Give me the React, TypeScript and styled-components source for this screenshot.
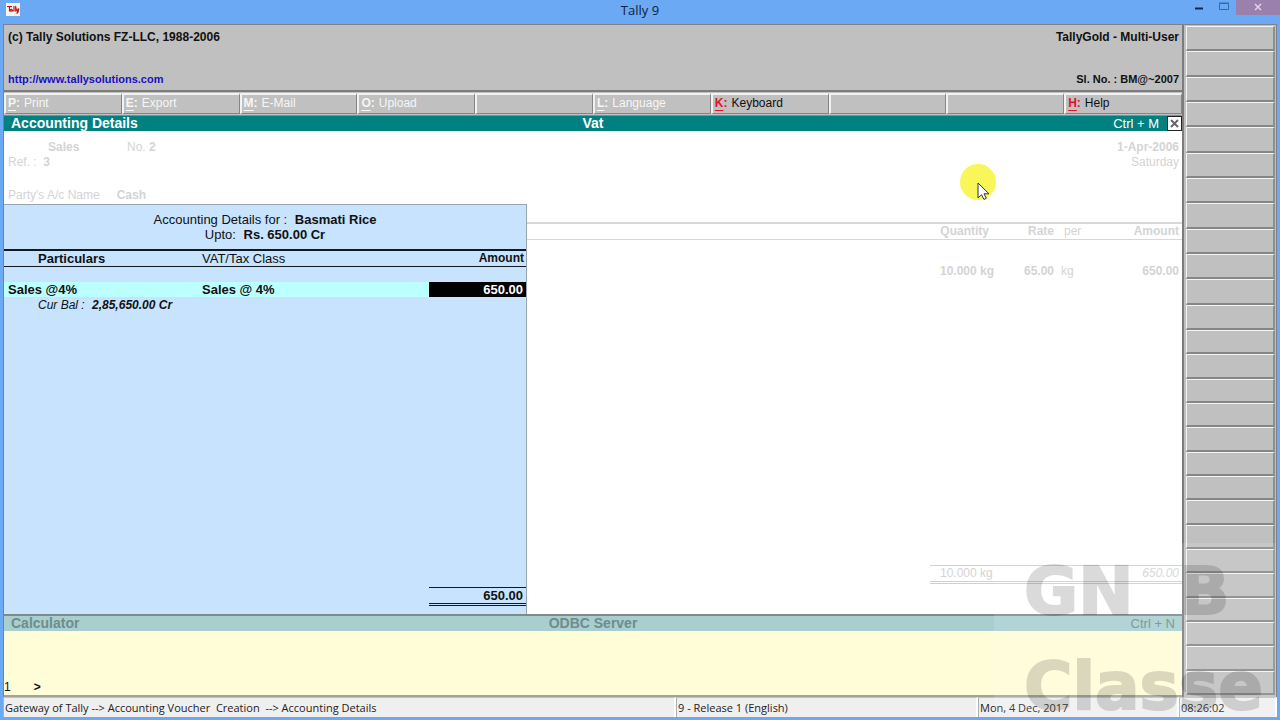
import React from "react";
import styled, { createGlobalStyle } from "styled-components";

const GlobalStyle = createGlobalStyle`
  * { box-sizing: border-box; }
  body { margin: 0; font: 13px/15px "Liberation Sans", Arial, sans-serif; color: #111; }
  button, input { font: inherit; color: inherit; margin: 0; }
`;

const Window = styled.div`
  position: relative;
  display: flex;
  flex-direction: column;
  min-height: 100vh;
  padding: 0 3px 3px;
  background: #6ba9f5;
  overflow: hidden;
`;

const TitleBar = styled.header`
  position: relative;
  display: flex;
  align-items: flex-start;
  justify-content: space-between;
  height: 24px;
  margin-right: -3px;
`;

const AppIcon = styled.svg`
  margin: 3px 0 0 3px;
`;

const Title = styled.h1`
  position: absolute;
  left: 0;
  right: 3px;
  top: 0;
  margin: 0;
  text-align: center;
  font: 13px/20px "Open Sans", "Noto Sans", sans-serif;
  color: #10203c;
`;

const Controls = styled.div`
  position: relative;
  display: flex;
`;

const ControlButton = styled.button<{ $close?: boolean }>`
  display: flex;
  align-items: center;
  justify-content: center;
  width: ${(p) => (p.$close ? 44 : 25)}px;
  height: 15px;
  padding: 0 0 ${(p) => (p.$close ? 2 : 0)}px;
  border: 0;
  background: ${(p) => (p.$close ? "#9a80ad" : "transparent")};
`;

const Frame = styled.div`
  flex: 1;
  display: flex;
  border: solid #7d828c;
  border-width: 1px 1px 0;
  background: #c0c0c0;
`;

const Main = styled.div`
  flex: 1;
  min-width: 0;
  display: flex;
  flex-direction: column;
  border-right: 2px solid #7c7c7c;
`;

const Banner = styled.div`
  display: flex;
  justify-content: space-between;
  height: 67px;
  padding: 5px 3px 3px 4px;
  border-bottom: 2px solid #7c7c7c;
  font-weight: bold;
  font-size: 12px;
`;

const BannerSide = styled.div<{ $end?: boolean }>`
  display: flex;
  flex-direction: column;
  justify-content: space-between;
  align-items: ${(p) => (p.$end ? "flex-end" : "flex-start")};
`;

const SiteLink = styled.a`
  color: #1a10c4;
  font-size: 11px;
  text-decoration: none;
`;

const Serial = styled.span`
  font-size: 11px;
`;

const Toolbar = styled.nav`
  display: grid;
  grid-template-columns: repeat(10, 1fr);
  height: 24px;
  padding: 1px 0;
  border-bottom: 1px solid #8a8a8a;
`;

const ToolButton = styled.button<{ $on?: boolean }>`
  display: flex;
  gap: 4px;
  align-items: center;
  padding: 0 2px 1px;
  border: solid;
  border-width: 2px 1px 1px 2px;
  border-color: #f2f2f2 #858585 #858585 #f2f2f2;
  background: #c0c0c0;
  color: ${(p) => (p.$on ? "#111" : "#f6f6f6")};
  font-size: 12px;
  line-height: 15px;
`;

const HotKey = styled.b<{ $on?: boolean }>`
  color: ${(p) => (p.$on ? "#e0142c" : "#f6f6f6")};
  u { text-underline-offset: 3px; }
`;

const Strip = styled.div<{ $dim?: boolean }>`
  display: grid;
  grid-template-columns: 1fr auto 1fr;
  align-items: center;
  height: 15px;
  background: ${(p) => (p.$dim ? "#a8cece" : "#008080")};
  color: ${(p) => (p.$dim ? "#6f8c8e" : "#fff")};
  font-size: 14px;
  font-weight: bold;
`;

const StripStart = styled.span`
  padding-left: 7px;
`;

const StripEnd = styled.div<{ $dim?: boolean }>`
  display: flex;
  align-items: center;
  justify-content: flex-end;
  gap: 8px;
  padding-right: ${(p) => (p.$dim ? 7 : 0)}px;
  font-weight: normal;
  font-size: 13px;
`;

const CloseBox = styled.button`
  display: flex;
  align-items: center;
  justify-content: center;
  width: 15px;
  height: 15px;
  padding: 0;
  border: 1px solid #222;
  background: #fff;
`;

const Workspace = styled.div`
  position: relative;
  flex: 1;
  display: flex;
  flex-direction: column;
  min-height: 480px;
  background: #fff;
  border-bottom: 2px solid #7f8a8c;
`;

const Voucher = styled.section`
  flex: 1;
  display: flex;
  flex-direction: column;
  padding-top: 9px;
  color: #d4d4d4;
  font-size: 12px;
`;

const VoucherHead = styled.div`
  display: flex;
  justify-content: space-between;
  height: 48px;
  padding: 0 3px 0 4px;
`;

const VoucherNumbers = styled.div`
  display: grid;
  grid-template-columns: 40px 79px auto;
  grid-template-rows: 15px 15px;
`;

const Wide = styled.span`
  grid-column: 1 / 4;
`;

const VoucherDate = styled.div`
  display: flex;
  flex-direction: column;
  text-align: right;
`;

const Party = styled.div`
  display: flex;
  gap: 17px;
  height: 34px;
  padding-left: 4px;
`;

const Items = styled.table`
  width: 100%;
  table-layout: fixed;
  border-collapse: collapse;
  text-align: right;
  font-weight: bold;
  th { height: 16px; padding: 0; border: solid #d8d8d8; border-width: 2px 0 1px; }
  td { height: 47px; padding: 16px 0 0; vertical-align: middle; }
  th:nth-child(2) { padding-right: 5px; }
  th:nth-child(4) { font-weight: normal; text-align: left; padding-left: 10px; }
  td:nth-child(4) { text-align: left; padding-left: 7px; font-weight: normal; }
  th:last-child, td:last-child { padding-right: 3px; }
`;

const Col = styled.col<{ $w?: number }>`
  width: ${(p) => (p.$w ? `${p.$w}px` : "auto")};
`;

const VoucherTotal = styled.div`
  display: flex;
  justify-content: space-between;
  width: 252px;
  margin: auto 0 30px auto;
  padding: 0 3px 0 10px;
  border-top: 1px solid #d0d0d0;
  border-bottom: 3px double #d0d0d0;
`;

const Panel = styled.section`
  position: absolute;
  left: 0;
  top: 73px;
  bottom: 0;
  width: 44.4%;
  display: flex;
  flex-direction: column;
  border: solid #98a6b4;
  border-width: 1px 1px 0 0;
  background: #c7e3fd;
`;

const PanelTitle = styled.div`
  height: 44px;
  padding-top: 7px;
  text-align: center;
  b { margin-left: 4px; }
`;

const Ledger = styled.table`
  width: 100%;
  table-layout: fixed;
  border-collapse: collapse;
  text-align: left;
  th { height: 16px; padding: 0; border: solid #101820; border-width: 2px 0 1px; }
  td { height: 15px; padding: 0; }
  tbody::before { content: ""; display: block; height: 15px; }
  th:first-child { padding-left: 34px; }
  th:nth-child(2) { font-weight: normal; }
  th:last-child { text-align: right; padding-right: 2px; font-size: 12px; }
`;

const Selected = styled.tr`
  background: #bcffff;
  font-weight: bold;
  td:first-child { padding-left: 4px; }
`;

const AmountInput = styled.input`
  display: block;
  width: 100%;
  height: 15px;
  padding: 0 3px;
  border: 0;
  outline: 0;
  background: #000;
  color: #fff;
  font-weight: bold;
  text-align: right;
`;

const Balance = styled.td`
  font-style: italic;
  font-size: 12px;
  && { padding: 1px 0 0 34px; }
  b { margin-left: 4px; }
`;

const PanelTotal = styled.div`
  width: 97px;
  margin: auto 0 8px auto;
  padding: 0 3px;
  border-top: 1px solid #101820;
  border-bottom: 3px double #101820;
  text-align: right;
  font-weight: bold;
`;

const Calculator = styled.label`
  display: flex;
  align-items: flex-end;
  height: 66px;
  border-bottom: 2px solid #a3a39b;
  background: #fffcd8;
  font-size: 12px;
  b { margin: 0 8px 0 23px; }
`;

const CalcInput = styled.input`
  flex: 1;
  height: 15px;
  padding: 0;
  border: 0;
  outline: 0;
  background: transparent;
`;

const SideBar = styled.aside`
  display: flex;
  flex-direction: column;
  width: 92px;
  padding: 1px 1px 2px 2px;
`;

const SideGroup = styled.div<{ $grow: number }>`
  flex: ${(p) => p.$grow} 1 0;
  display: flex;
  flex-direction: column;
`;

const SideButton = styled.button`
  flex: 1;
  min-height: 0;
  padding: 0;
  border: solid;
  border-width: 1px 2px 2px 1px;
  border-color: #f4f4f4 #8e8e8e #868686 #f4f4f4;
  background: #c0c0c0;
`;

const StatusBar = styled.footer`
  display: grid;
  grid-template-columns: 673fr 302fr 201fr 98fr;
  height: 20px;
  background: #f0eff0;
  font: 11px/19px "Open Sans", "Noto Sans", sans-serif;
  color: #222;
`;

const StatusCell = styled.span`
  padding-left: 1px;
  border-left: 1px solid #b0b0b0;
  border-top: 1px solid #c4c0c0;
  border-right: 2px solid #fff;
  white-space: pre;
`;

const Pointer = styled.svg`
  position: absolute;
  left: 958px;
  top: 163px;
`;

const Watermark = styled.div`
  position: absolute;
  right: 4px;
  bottom: 3px;
  width: 282px;
  height: 174px;
  padding: 1px 0 0 30px;
  background: rgba(255, 255, 255, 0.12);
  font: bold 66px/95px "DejaVu Sans", sans-serif;
  white-space: pre;
  pointer-events: none;
`;

const WatermarkText = styled.span`
  opacity: 0.14;
  color: #000;
  -webkit-text-stroke: 2px #000;
`;

const tools = [
  { key: "P", label: "Print" },
  { key: "E", label: "Export" },
  { key: "M", label: "E-Mail" },
  { key: "O", label: "Upload" },
  {},
  { key: "L", label: "Language" },
  { key: "K", label: "Keyboard", on: true },
  {},
  {},
  { key: "H", label: "Help", on: true },
] as { key?: string; label?: string; on?: boolean }[];

const sideGroups = [
  { count: 12, grow: 304 },
  { count: 15, grow: 365 },
];

export default function App() {
  return (
    <>
      <GlobalStyle />
      <Window>
        <TitleBar>
          <AppIcon width="14" height="13" viewBox="0 0 14 13">
            <rect width="14" height="13" fill="#fbf3ee" />
            <path d="M1 3.5h5M3.5 3.5v5M6 6.5q-2-.5-1.500 1.500q1.500.5 2-1.500v2M8 3v5.500M9.700 3v5.500M11 5.500v2.500q1 .5 1.700-2.500q0 4-2.200 5" fill="none" stroke="#c01818" strokeWidth="1.200" />
          </AppIcon>
          <Title>Tally 9</Title>
          <Controls>
            <ControlButton aria-label="Minimize">
              <svg width="8" height="15"><path d="M0 8.500h8" stroke="#14264a" strokeWidth="2" /></svg>
            </ControlButton>
            <ControlButton aria-label="Maximize">
              <svg width="10" height="15"><path d="M.5 3.500h9v6h-9zM0 3h10" fill="none" stroke="#2f6fa8" /></svg>
            </ControlButton>
            <ControlButton $close aria-label="Close window">
              <svg width="8" height="8"><path d="M1 1l6 6M7 1l-6 6" stroke="#e0d4ea" strokeWidth="1.500" /></svg>
            </ControlButton>
          </Controls>
        </TitleBar>
        <Frame>
          <Main>
            <Banner>
              <BannerSide>
                <span>(c) Tally Solutions FZ-LLC, 1988-2006</span>
                <SiteLink href="http://www.tallysolutions.com">http://www.tallysolutions.com</SiteLink>
              </BannerSide>
              <BannerSide $end>
                <span>TallyGold - Multi-User</span>
                <Serial>Sl. No. : BM@~2007</Serial>
              </BannerSide>
            </Banner>
            <Toolbar>
              {tools.map((t, i) => (
                <ToolButton key={i} $on={t.on}>
                  {t.key && <HotKey $on={t.on}><u>{t.key}</u>:</HotKey>}
                  {t.label}
                </ToolButton>
              ))}
            </Toolbar>
            <Strip>
              <StripStart>Accounting Details</StripStart>
              <span>Vat</span>
              <StripEnd>
                Ctrl + M
                <CloseBox aria-label="Close">
                  <svg width="9" height="9"><path d="M1 1l7 7M8 1l-7 7" stroke="#666" strokeWidth="2" /></svg>
                </CloseBox>
              </StripEnd>
            </Strip>
            <Workspace>
              <Voucher>
                <VoucherHead>
                  <VoucherNumbers>
                    <span />
                    <b>Sales</b>
                    <span>No. <b>2</b></span>
                    <Wide>Ref. :&nbsp; <b>3</b></Wide>
                  </VoucherNumbers>
                  <VoucherDate>
                    <b>1-Apr-2006</b>
                    <span>Saturday</span>
                  </VoucherDate>
                </VoucherHead>
                <Party>
                  <span>Party's A/c Name</span>
                  <b>Cash</b>
                </Party>
                <Items>
                  <colgroup>
                    <Col /><Col $w={100} /><Col $w={60} /><Col $w={40} /><Col $w={88} />
                  </colgroup>
                  <thead>
                    <tr><th /><th>Quantity</th><th>Rate</th><th>per</th><th>Amount</th></tr>
                  </thead>
                  <tbody>
                    <tr><td /><td>10.000 kg</td><td>65.00</td><td>kg</td><td>650.00</td></tr>
                  </tbody>
                </Items>
                <VoucherTotal>
                  <span>10.000 kg</span>
                  <i>650.00</i>
                </VoucherTotal>
              </Voucher>
              <Panel>
                <PanelTitle>
                  <div>Accounting Details for : <b>Basmati Rice</b></div>
                  <div>Upto: <b>Rs. 650.00 Cr</b></div>
                </PanelTitle>
                <Ledger>
                  <colgroup><Col $w={198} /><Col /><Col $w={97} /></colgroup>
                  <thead>
                    <tr><th>Particulars</th><th>VAT/Tax Class</th><th>Amount</th></tr>
                  </thead>
                  <tbody>
                    <Selected>
                      <td>Sales @4%</td>
                      <td>Sales @ 4%</td>
                      <td><AmountInput aria-label="Amount" defaultValue="650.00" /></td>
                    </Selected>
                    <tr><Balance colSpan={3}>Cur Bal : <b>2,85,650.00 Cr</b></Balance></tr>
                  </tbody>
                </Ledger>
                <PanelTotal>650.00</PanelTotal>
              </Panel>
            </Workspace>
            <Strip $dim>
              <StripStart>Calculator</StripStart>
              <span>ODBC Server</span>
              <StripEnd $dim>Ctrl + N</StripEnd>
            </Strip>
            <Calculator>
              1<b>&gt;</b>
              <CalcInput aria-label="Calculator input" />
            </Calculator>
          </Main>
          <SideBar>
            {sideGroups.map((g) => (
              <SideGroup key={g.count} $grow={g.grow}>
                {Array.from({ length: g.count }, (_, i) => <SideButton key={i} />)}
              </SideGroup>
            ))}
          </SideBar>
        </Frame>
        <StatusBar>
          <StatusCell>{"Gateway of Tally --> Accounting Voucher  Creation  --> Accounting Details"}</StatusCell>
          <StatusCell>9 - Release 1 (English)</StatusCell>
          <StatusCell>Mon, 4 Dec, 2017</StatusCell>
          <StatusCell>08:26:02</StatusCell>
        </StatusBar>
        <Watermark aria-hidden="true">
          <WatermarkText>{"GN  B\nClasse"}</WatermarkText>
        </Watermark>
        <Pointer width="40" height="40" viewBox="0 0 40 40">
          <circle cx="20" cy="19" r="18" fill="#f7f53c" fillOpacity="0.850" />
          <path d="M20 20v15l3.500-3.200 2.500 4.700 2.300-1.200-2.300-4.500h5z" fill="#fff" stroke="#333" />
        </Pointer>
      </Window>
    </>
  );
}
